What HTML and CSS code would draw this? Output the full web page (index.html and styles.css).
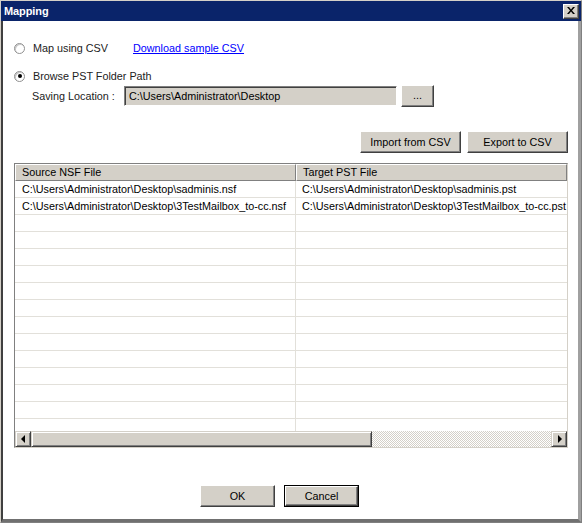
FILE: index.html
```html
<!DOCTYPE html>
<html>
<head>
<meta charset="utf-8">
<link rel="stylesheet" href="styles.css">
</head>
<body>
<div class="window">
  <div class="titlebar">
    <span class="title">Mapping</span>
    <span class="close"><svg width="8" height="7" viewBox="0 0 8 7"><path d="M0 0h2l2 2.5L6 0h2L5 3.5 8 7H6L4 4.5 2 7H0l3-3.5z" fill="#000"/></svg></span>
  </div>
  <div class="content">
    <div class="opt-row">
      <span class="radio"></span>
      <span class="opt-label first">Map using CSV</span>
      <a class="link" href="#">Download sample CSV</a>
    </div>
    <div class="opt-row second">
      <span class="radio checked"></span>
      <span class="opt-label">Browse PST Folder Path</span>
    </div>
    <div class="save-row">
      <span class="save-label">Saving Location :</span>
      <div class="textbox">C:\Users\Administrator\Desktop</div>
      <div class="btn dots">...</div>
    </div>
    <div class="actions">
      <div class="btn wide">Import from CSV</div>
      <div class="btn wide">Export to CSV</div>
    </div>
    <div class="list">
      <div class="header">
        <div class="hcell c1">Source NSF File</div>
        <div class="hcell c2">Target PST File</div>
      </div>
      <div class="rows">
        <div class="row"><div class="cell c1">C:\Users\Administrator\Desktop\sadminis.nsf</div><div class="cell c2">C:\Users\Administrator\Desktop\sadminis.pst</div></div>
        <div class="row"><div class="cell c1">C:\Users\Administrator\Desktop\3TestMailbox_to-cc.nsf</div><div class="cell c2">C:\Users\Administrator\Desktop\3TestMailbox_to-cc.pst</div></div>
        <div class="row"><div class="cell c1"></div><div class="cell c2"></div></div>
        <div class="row"><div class="cell c1"></div><div class="cell c2"></div></div>
        <div class="row"><div class="cell c1"></div><div class="cell c2"></div></div>
        <div class="row"><div class="cell c1"></div><div class="cell c2"></div></div>
        <div class="row"><div class="cell c1"></div><div class="cell c2"></div></div>
        <div class="row"><div class="cell c1"></div><div class="cell c2"></div></div>
        <div class="row"><div class="cell c1"></div><div class="cell c2"></div></div>
        <div class="row"><div class="cell c1"></div><div class="cell c2"></div></div>
        <div class="row"><div class="cell c1"></div><div class="cell c2"></div></div>
        <div class="row"><div class="cell c1"></div><div class="cell c2"></div></div>
        <div class="row"><div class="cell c1"></div><div class="cell c2"></div></div>
        <div class="row"><div class="cell c1"></div><div class="cell c2"></div></div>
        <div class="row"><div class="cell c1"></div><div class="cell c2"></div></div>
      </div>
      <div class="hscroll">
        <div class="sbtn"><span class="tri left"></span></div>
        <div class="thumb"></div>
        <div class="track"></div>
        <div class="sbtn"><span class="tri right"></span></div>
      </div>
    </div>
    <div class="footer">
      <div class="btn foot">OK</div>
      <div class="default"><div class="btn foot inner">Cancel</div></div>
    </div>
  </div>
</div>
</body>
</html>
```

FILE: styles.css
```css
* { box-sizing: border-box; }
html, body { margin: 0; padding: 0; background: #fff; }
body {
  font-family: "Liberation Sans", Arial, sans-serif;
  font-size: 10.8px;
  color: #000;
}
.window {
  width: 582px;
  height: 523px;
  display: flex;
  flex-direction: column;
  background: #d4d0c8;
  border-top: 1px solid #d4d0c8;
  border-left: 1px solid #d4d0c8;
  border-right: 1px solid #808080;
  border-bottom: 1px solid #808080;
}
.titlebar {
  height: 20px;
  flex: none;
  background: #0a246a;
  display: flex;
  align-items: center;
  justify-content: space-between;
  padding: 0 2px 0 3px;
}
.title {
  color: #fff;
  font-weight: bold;
  font-size: 11px;
  letter-spacing: -0.1px;
}
.close {
  width: 16px;
  height: 15px;
  background: #d4d0c8;
  border-top: 1px solid #fff;
  border-left: 1px solid #fff;
  border-right: 1px solid #404040;
  border-bottom: 1px solid #404040;
  box-shadow: inset -1px -1px 0 #808080;
  display: flex;
  align-items: center;
  justify-content: center;
  padding-bottom: 1px;
}
.content {
  flex: 1;
  background: #fff;
  border-left: 2px solid #404040;
  border-right: 3px solid #a0a0a0;
  border-bottom: 3px solid #707070;
  padding: 0 10px 0 11px;
  display: flex;
  flex-direction: column;
}
.opt-row {
  margin-top: 20px;
  height: 14px;
  display: flex;
  align-items: center;
}
.opt-row.second { margin-top: 14px; }
.radio {
  width: 11px;
  height: 11px;
  border-radius: 50%;
  background: #fff;
  border: 1px solid #909090;
  box-shadow: inset 1px 1px 0 #c8c8c8;
  margin-right: 8px;
  position: relative;
  flex: none;
}
.radio.checked::after {
  content: "";
  position: absolute;
  left: 2.5px;
  top: 2.5px;
  width: 4px;
  height: 4px;
  border-radius: 50%;
  background: #000;
}
.opt-label { white-space: nowrap; color: #222; }
.opt-label.first { width: 100px; }
.link {
  color: #0000ff;
  text-decoration: underline;
}
.save-row {
  margin-top: 2px;
  height: 22px;
  display: flex;
  align-items: center;
  padding-left: 18px;
}
.save-label { width: 92px; white-space: nowrap; color: #222; }
.textbox {
  width: 273px;
  height: 20px;
  background: #d4d0c8;
  border-top: 1px solid #808080;
  border-left: 1px solid #808080;
  border-right: 1px solid #fff;
  border-bottom: 1px solid #fff;
  box-shadow: inset 1px 1px 0 #404040;
  padding: 3px 0 0 4px;
  white-space: nowrap;
}
.btn {
  background: #d4d0c8;
  border-top: 1px solid #fff;
  border-left: 1px solid #fff;
  border-right: 1px solid #404040;
  border-bottom: 1px solid #404040;
  box-shadow: inset -1px -1px 0 #808080;
  display: flex;
  align-items: center;
  justify-content: center;
  white-space: nowrap;
}
.dots {
  width: 33px;
  height: 22px;
  margin-left: 4px;
  padding-bottom: 2px;
}
.actions {
  margin-top: 24px;
  display: flex;
  justify-content: flex-end;
  gap: 6px;
}
.wide { width: 101px; height: 22px; }
.list {
  margin-top: 10px;
  height: 285px;
  border-top: 1px solid #808080;
  border-left: 1px solid #808080;
  border-right: 1px solid #d4d0c8;
  border-bottom: 1px solid #d4d0c8;
  display: flex;
  flex-direction: column;
  overflow: hidden;
}
.header {
  display: flex;
  height: 17px;
  flex: none;
}
.hcell {
  background: #d4d0c8;
  border-top: 1px solid #fff;
  border-left: 1px solid #fff;
  border-right: 1px solid #808080;
  border-bottom: 1px solid #808080;
  padding: 1px 0 0 6px;
  white-space: nowrap;
}
.c1 { width: 281px; flex: none; }
.c2 { flex: 1; padding-left: 6px; }
.rows {
  flex: 1;
  overflow: hidden;
  background: #fff;
}
.row {
  display: flex;
  height: 17px;
}
.cell {
  border-bottom: 1px solid #e2e0da;
  padding: 2px 0 0 7px;
  white-space: nowrap;
  overflow: hidden;
}
.cell.c1 { border-right: 1px solid #e2e0da; }
.cell.c2 { padding-left: 6px; }
.hscroll {
  height: 16px;
  flex: none;
  display: flex;
}
.sbtn {
  width: 16px;
  height: 16px;
  flex: none;
  background: #d4d0c8;
  border-top: 1px solid #d4d0c8;
  border-left: 1px solid #d4d0c8;
  border-right: 1px solid #404040;
  border-bottom: 1px solid #404040;
  box-shadow: inset 1px 1px 0 #fff, inset -1px -1px 0 #808080;
  display: flex;
  align-items: center;
  justify-content: center;
}
.tri { width: 0; height: 0; border-top: 4px solid transparent; border-bottom: 4px solid transparent; }
.tri.left { border-right: 4px solid #000; margin-left: -1px; }
.tri.right { border-left: 4px solid #000; margin-left: 1px; }
.thumb {
  width: 341px;
  flex: none;
  background: #d4d0c8;
  border-top: 1px solid #d4d0c8;
  border-left: 1px solid #d4d0c8;
  border-right: 1px solid #404040;
  border-bottom: 1px solid #404040;
  box-shadow: inset 1px 1px 0 #fff, inset -1px -1px 0 #808080;
}
.track {
  flex: 1;
  background: repeating-conic-gradient(#d4d0c8 0 25%, #fff 0 50%) 0 0 / 2px 2px;
}
.footer {
  margin-top: 37px;
  display: flex;
  padding-left: 186px;
  gap: 9px;
}
.foot { width: 75px; height: 22px; }
.default {
  width: 75px;
  height: 22px;
  border: 1px solid #000;
}
.foot.inner { width: 73px; height: 20px; }
```
